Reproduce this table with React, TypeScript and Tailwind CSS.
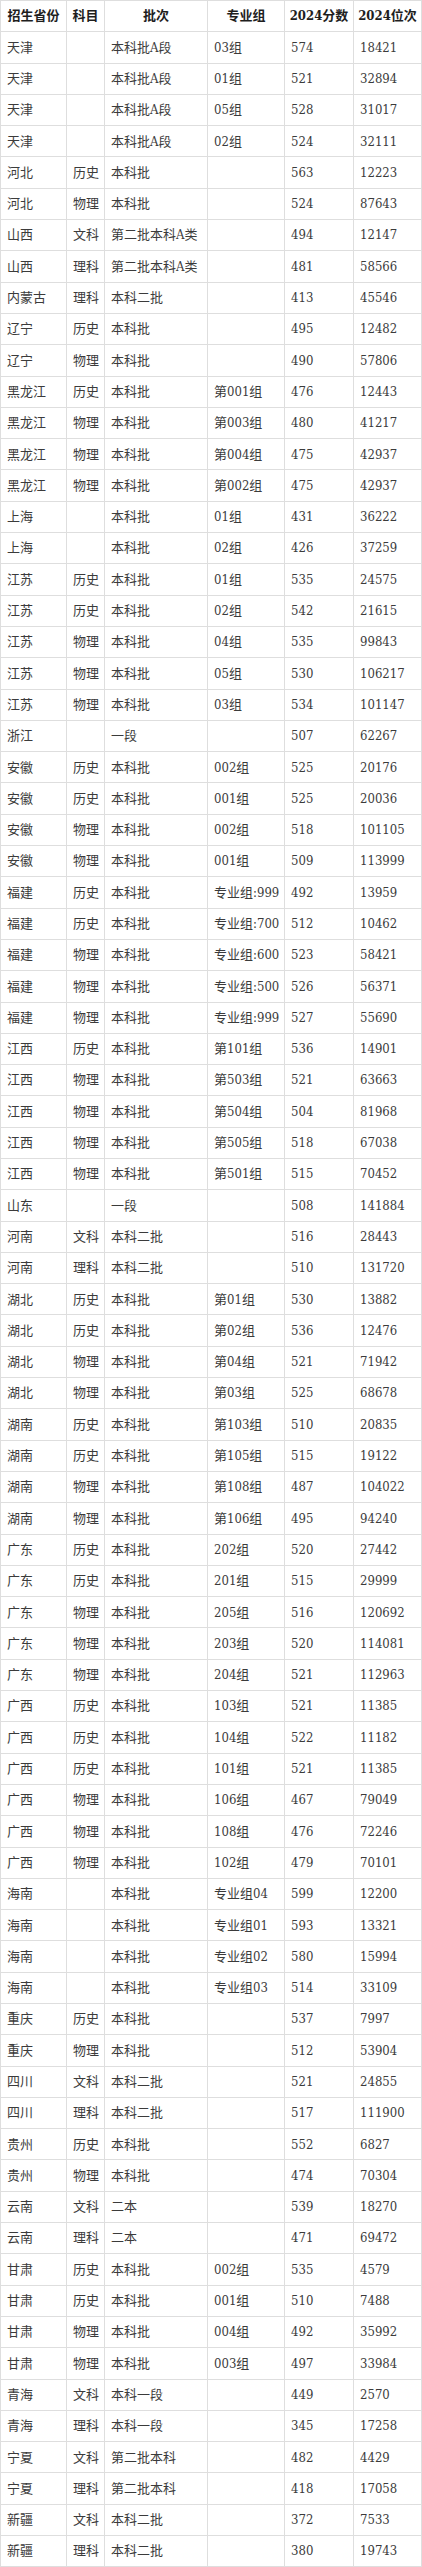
type Row = [string, string, string, string, string, string];

const rows: Row[] = [
  ["天津", "", "本科批A段", "03组", "574", "18421"],
  ["天津", "", "本科批A段", "01组", "521", "32894"],
  ["天津", "", "本科批A段", "05组", "528", "31017"],
  ["天津", "", "本科批A段", "02组", "524", "32111"],
  ["河北", "历史", "本科批", "", "563", "12223"],
  ["河北", "物理", "本科批", "", "524", "87643"],
  ["山西", "文科", "第二批本科A类", "", "494", "12147"],
  ["山西", "理科", "第二批本科A类", "", "481", "58566"],
  ["内蒙古", "理科", "本科二批", "", "413", "45546"],
  ["辽宁", "历史", "本科批", "", "495", "12482"],
  ["辽宁", "物理", "本科批", "", "490", "57806"],
  ["黑龙江", "历史", "本科批", "第001组", "476", "12443"],
  ["黑龙江", "物理", "本科批", "第003组", "480", "41217"],
  ["黑龙江", "物理", "本科批", "第004组", "475", "42937"],
  ["黑龙江", "物理", "本科批", "第002组", "475", "42937"],
  ["上海", "", "本科批", "01组", "431", "36222"],
  ["上海", "", "本科批", "02组", "426", "37259"],
  ["江苏", "历史", "本科批", "01组", "535", "24575"],
  ["江苏", "历史", "本科批", "02组", "542", "21615"],
  ["江苏", "物理", "本科批", "04组", "535", "99843"],
  ["江苏", "物理", "本科批", "05组", "530", "106217"],
  ["江苏", "物理", "本科批", "03组", "534", "101147"],
  ["浙江", "", "一段", "", "507", "62267"],
  ["安徽", "历史", "本科批", "002组", "525", "20176"],
  ["安徽", "历史", "本科批", "001组", "525", "20036"],
  ["安徽", "物理", "本科批", "002组", "518", "101105"],
  ["安徽", "物理", "本科批", "001组", "509", "113999"],
  ["福建", "历史", "本科批", "专业组:999", "492", "13959"],
  ["福建", "历史", "本科批", "专业组:700", "512", "10462"],
  ["福建", "物理", "本科批", "专业组:600", "523", "58421"],
  ["福建", "物理", "本科批", "专业组:500", "526", "56371"],
  ["福建", "物理", "本科批", "专业组:999", "527", "55690"],
  ["江西", "历史", "本科批", "第101组", "536", "14901"],
  ["江西", "物理", "本科批", "第503组", "521", "63663"],
  ["江西", "物理", "本科批", "第504组", "504", "81968"],
  ["江西", "物理", "本科批", "第505组", "518", "67038"],
  ["江西", "物理", "本科批", "第501组", "515", "70452"],
  ["山东", "", "一段", "", "508", "141884"],
  ["河南", "文科", "本科二批", "", "516", "28443"],
  ["河南", "理科", "本科二批", "", "510", "131720"],
  ["湖北", "历史", "本科批", "第01组", "530", "13882"],
  ["湖北", "历史", "本科批", "第02组", "536", "12476"],
  ["湖北", "物理", "本科批", "第04组", "521", "71942"],
  ["湖北", "物理", "本科批", "第03组", "525", "68678"],
  ["湖南", "历史", "本科批", "第103组", "510", "20835"],
  ["湖南", "历史", "本科批", "第105组", "515", "19122"],
  ["湖南", "物理", "本科批", "第108组", "487", "104022"],
  ["湖南", "物理", "本科批", "第106组", "495", "94240"],
  ["广东", "历史", "本科批", "202组", "520", "27442"],
  ["广东", "历史", "本科批", "201组", "515", "29999"],
  ["广东", "物理", "本科批", "205组", "516", "120692"],
  ["广东", "物理", "本科批", "203组", "520", "114081"],
  ["广东", "物理", "本科批", "204组", "521", "112963"],
  ["广西", "历史", "本科批", "103组", "521", "11385"],
  ["广西", "历史", "本科批", "104组", "522", "11182"],
  ["广西", "历史", "本科批", "101组", "521", "11385"],
  ["广西", "物理", "本科批", "106组", "467", "79049"],
  ["广西", "物理", "本科批", "108组", "476", "72246"],
  ["广西", "物理", "本科批", "102组", "479", "70101"],
  ["海南", "", "本科批", "专业组04", "599", "12200"],
  ["海南", "", "本科批", "专业组01", "593", "13321"],
  ["海南", "", "本科批", "专业组02", "580", "15994"],
  ["海南", "", "本科批", "专业组03", "514", "33109"],
  ["重庆", "历史", "本科批", "", "537", "7997"],
  ["重庆", "物理", "本科批", "", "512", "53904"],
  ["四川", "文科", "本科二批", "", "521", "24855"],
  ["四川", "理科", "本科二批", "", "517", "111900"],
  ["贵州", "历史", "本科批", "", "552", "6827"],
  ["贵州", "物理", "本科批", "", "474", "70304"],
  ["云南", "文科", "二本", "", "539", "18270"],
  ["云南", "理科", "二本", "", "471", "69472"],
  ["甘肃", "历史", "本科批", "002组", "535", "4579"],
  ["甘肃", "历史", "本科批", "001组", "510", "7488"],
  ["甘肃", "物理", "本科批", "004组", "492", "35992"],
  ["甘肃", "物理", "本科批", "003组", "497", "33984"],
  ["青海", "文科", "本科一段", "", "449", "2570"],
  ["青海", "理科", "本科一段", "", "345", "17258"],
  ["宁夏", "文科", "第二批本科", "", "482", "4429"],
  ["宁夏", "理科", "第二批本科", "", "418", "17058"],
  ["新疆", "文科", "本科二批", "", "372", "7533"],
  ["新疆", "理科", "本科二批", "", "380", "19743"],
];

const headers = ["招生省份", "科目", "批次", "专业组", "2024分数", "2024位次"];
const widths = ["w-[66px]", "w-[38px]", "w-[103px]", "w-[77px]", "w-[69px]", "w-[68px]"];

export default function App() {
  return (
    <div className="w-[422px] bg-white font-['DejaVu_Serif_Condensed','Liberation_Serif','Noto_Sans_CJK_SC',serif] text-[13px]">
      <table className="w-[421px] table-fixed border-collapse">
        <colgroup>
          {widths.map((w, i) => (
            <col key={i} className={w} />
          ))}
        </colgroup>
        <thead>
          <tr className="h-[31.3px]">
            {headers.map((h) => (
              <th
                key={h}
                className="border border-[#dedede] px-[2px] text-center font-bold whitespace-nowrap text-[#1e1e1e]"
              >
                {h}
              </th>
            ))}
          </tr>
        </thead>
        <tbody>
          {rows.map((r, i) => (
            <tr key={i} className="h-[31.3px]">
              {r.map((c, j) => (
                <td
                  key={j}
                  className="border border-[#dedede] pl-[6px] pr-0 text-left whitespace-nowrap text-[#3b3b3b]"
                >
                  {c}
                </td>
              ))}
            </tr>
          ))}
        </tbody>
      </table>
    </div>
  );
}
